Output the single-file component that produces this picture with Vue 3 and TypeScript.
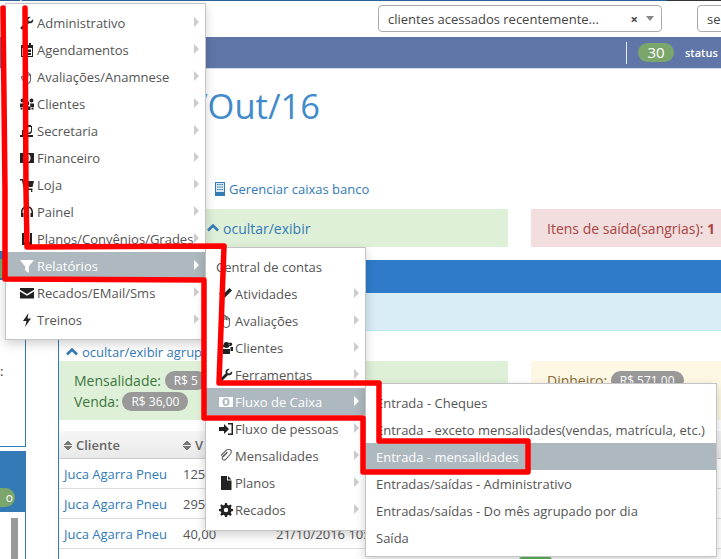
<script setup lang="ts">
type Item = { label: string; icon?: string; arrow?: boolean; active?: boolean }

const icons: Record<string, string> = {
  wrench: 'M13 3.200 10.600 5.600 8.600 5.200 8.200 3.200 10.600.9C8.800.3 6.700 1.600 6.500 3.600c0 .6.1 1.100.3 1.600L1 11c-.7.7-.6 1.500 0 2 .6.6 1.400.6 2 0l5.800-5.800c2.500.8 5.200-1.300 4.200-4Z',
  calendar: 'M3 0h2v2H3zM9 0h2v2H9zM1 2h12v12H1zM2 5v8h10V5zM3 6.500h3.500v2.500H3zM7.500 6.500H11v2.500H7.500zM3 10h3.500v2H3zM7.500 10H11v2H7.500z',
  hand: 'M4.500 7V1.800c0-1 1.500-1 1.500 0V6m0 0V3c0-1 1.500-1 1.500 0v3m0 0V3.500c0-1 1.500-1 1.500 0V6.500m0 0V5c0-1 1.500-1 1.500 0v4.500c0 2.500-1.500 4-3.500 4H7C5.500 13.500 4.500 12.500 3.500 11L1.500 8c-.5-1 .8-1.800 1.500-1L4.500 9',
  users: 'M2.500 1.500a2 2 0 1 1 0 4 2 2 0 0 1 0-4ZM11.500 1.500a2 2 0 1 1 0 4 2 2 0 0 1 0-4ZM7 4a2.300 2.300 0 1 1 0 4.600A2.300 2.300 0 0 1 7 4ZM0 6.500h4L3.500 10H0ZM10 6.500h4V10h-3.500ZM3.500 9.500h7V13h-7ZM.5 10.500h2v2h-2ZM11.500 10.500h2v2h-2Z',
  people: 'M7.500 1a3 3 0 1 1 0 6 3 3 0 0 1 0-6ZM3 3.500a1.800 1.800 0 1 1 0 3.600 1.800 1.800 0 0 1 0-3.600ZM11.500 1.500a1.800 1.800 0 1 1 0 3.600 1.800 1.800 0 0 1 0-3.600ZM4 8h7v5H4ZM0 8h3v4H0ZM11.500 6H14v4h-2.500Z',
  tie: 'M5 1h6v1h1v5c0 1.500-1 2.500-2 3h-4V8.500h3.500C10.500 8 11 7 11 6V3H5v3H3V2h2ZM2 6h6v5H2ZM0 11h13v2H0Z',
  money: 'M0 2h14v10H0ZM7 3a3.500 4 0 1 0 0 8 3.500 4 0 0 0 0-8ZM7 4.500a1.500 2.500 0 1 1 0 5 1.500 2.500 0 0 1 0-5Z',
  cart: 'M0 1h3l.5 2H14l-1.500 6H5l.3 1.500h7.200V12H4L2 2.500H0ZM5 12.200a1 1 0 1 1 0 1.800ZM11 12.200a1 1 0 1 1 0 1.800Z',
  headset: 'M7 1C3.500 1 1 3.500 1 7v5h2.500V8h-1V7c0-2.500 2-4.500 4.500-4.500S11.500 4.500 11.500 7v1h-1v4H13V7c0-3.500-2.500-6-6-6ZM5 8h1.500v5H5ZM7.500 8H9v5H7.500Z',
  book: 'M2 1h10v12H2ZM4 1v9h6V1Z',
  filter: 'M0 1h14L8.800 7.500V14L5.200 11.500v-4Z',
  envelope: 'M0 2h14v1.800L7 8 0 3.800ZM0 5.500 7 9.800l7-4.300V12.500H0Z',
  flash: 'M8.500 0 3 8h3.500L5 14l6-8.500H7.500Z',
  signin: 'M0 5h5V2l5 5-5 5V9H0ZM9 1h5v12H9v-1.500h3.500v-9H9Z',
  clip: 'M2 6.500 7.500 1c1.500-1 3-1 4 0s1 2.500 0 4l-5 5.500c-.8.8-2 .8-2.700 0-.7-.7-.7-1.700 0-2.500L8 4M3 8l5.500-5',
  file: 'M2 0h6v4.500h4.500V14H2ZM9 0l3.500 3.500H9Z',
  gear: 'M6 0h2l.4 2 1.300.5 1.700-1.100L12.800 2.800l-1.100 1.700.5 1.300 1.800.3v2l-1.800.4-.5 1.300 1.100 1.700-1.400 1.400-1.700-1.100-1.300.5L8 14H6l-.4-1.800-1.300-.5-1.700 1.100-1.400-1.400 1.100-1.700-.5-1.300L0 8V6l1.800-.3.5-1.300-1.100-1.700 1.400-1.400 1.700 1.100 1.300-.5ZM7 4.800a2.200 2.200 0 1 0 0 4.400 2.200 2.200 0 0 0 0-4.400Z',
  pencil: 'M10.500 1 13 3.500 5 11.500 1 13l1.500-4ZM0 6.500l3-2 1 1-3 2Z',
}
const stroked = ['clip', 'hand']

const menu1: Item[] = [
  { label: 'Administrativo', icon: 'wrench', arrow: true },
  { label: 'Agendamentos', icon: 'calendar', arrow: true },
  { label: 'Avaliações/Anamnese', icon: 'hand', arrow: true },
  { label: 'Clientes', icon: 'users', arrow: true },
  { label: 'Secretaria', icon: 'tie', arrow: true },
  { label: 'Financeiro', icon: 'money', arrow: true },
  { label: 'Loja', icon: 'cart', arrow: true },
  { label: 'Painel', icon: 'headset', arrow: true },
  { label: 'Planos/Convênios/Grades', icon: 'book', arrow: true },
  { label: 'Relatórios', icon: 'filter', arrow: true, active: true },
  { label: 'Recados/EMail/Sms', icon: 'envelope', arrow: true },
  { label: 'Treinos', icon: 'flash', arrow: true },
]
const menu2: Item[] = [
  { label: 'Central de contas' },
  { label: 'Atividades', icon: 'pencil', arrow: true },
  { label: 'Avaliações', icon: 'hand', arrow: true },
  { label: 'Clientes', icon: 'people', arrow: true },
  { label: 'Ferramentas', icon: 'wrench', arrow: true },
  { label: 'Fluxo de Caixa', icon: 'money', arrow: true, active: true },
  { label: 'Fluxo de pessoas', icon: 'signin', arrow: true },
  { label: 'Mensalidades', icon: 'clip', arrow: true },
  { label: 'Planos', icon: 'file', arrow: true },
  { label: 'Recados', icon: 'gear', arrow: true },
]
const menu3: Item[] = [
  { label: 'Entrada - Cheques' },
  { label: 'Entrada - exceto mensalidades(vendas, matrícula, etc.)' },
  { label: 'Entrada - mensalidades', active: true },
  { label: 'Entradas/saídas - Administrativo' },
  { label: 'Entradas/saídas - Do mês agrupado por dia' },
  { label: 'Saída' },
]
const menus = [
  { key: 'm1', items: menu1 },
  { key: 'm2', items: menu2 },
  { key: 'm3', items: menu3 },
]
const rows = [
  { name: 'Juca Agarra Pneu', value: '125', date: '' },
  { name: 'Juca Agarra Pneu', value: '295', date: '' },
  { name: 'Juca Agarra Pneu', value: '40,00', date: '21/10/2016 10:' },
]
</script>

<template>
  <div class="page">
    <div class="strip"></div>
    <header class="header">
      <div class="select first">
        <span class="sel-text">clientes acessados recentemente...</span>
        <span class="sel-x">×</span>
        <span class="sel-arrow"></span>
      </div>
      <div class="select second"><span class="sel-text">sel</span></div>
    </header>
    <div class="bar">
      <span class="bar-div"></span>
      <span class="bar-badge">30</span>
      <span class="bar-status">status d</span>
    </div>
    <div class="body">
      <aside class="side">
        <div class="side-a"><span class="side-badge">o</span></div>
        <div class="side-b"><span class="side-colon">:</span></div>
        <div class="side-c"><span class="side-badge big">o</span></div>
        <div class="side-d"><span class="side-gray"></span></div>
      </aside>
      <main class="main">
        <div class="title-row"><h1 class="title">21/Out/16</h1></div>
        <div class="link-row">
          <svg class="bank" width="10" height="14" viewBox="0 0 10 14"><path d="M0 0h10v14H0Z" fill="#337ab7"/><path d="M1 1h8v9H1Z" fill="#dbe7f2"/><path d="M2 2h1.500v1H2zM4.300 2h1.500v1H4.300zM6.500 2H8v1H6.500zM2 4.500h1.500v1H2zM4.300 4.500h1.500v1H4.300zM6.500 4.500H8v1H6.500zM2 7h1.500v1H2zM4.300 7h1.500v1H4.300zM6.500 7H8v1H6.500z" fill="#337ab7"/></svg>
          <a class="link">Gerenciar caixas banco</a>
        </div>
        <div class="alerts">
          <div class="alert green">
            <svg class="chev" width="12" height="8" viewBox="0 0 12 8"><path d="M1 6.500 6 1.500l5 5" fill="none" stroke="#337ab7" stroke-width="2.500"/></svg>
            <a class="link big">ocultar/exibir</a>
          </div>
          <div class="alert red">Itens de saída(sangrias): <b>1</b></div>
        </div>
        <section class="panel">
          <div class="panel-head"></div>
          <div class="panel-info"></div>
          <div class="toggle">
            <svg class="chev" width="12" height="8" viewBox="0 0 12 8"><path d="M1 6.500 6 1.500l5 5" fill="none" stroke="#337ab7" stroke-width="2.500"/></svg>
            <a class="link">ocultar/exibir agrup</a>
          </div>
          <div class="boxes">
            <div class="box box-green">
              <div class="box-line">Mensalidade: <span class="pill">R$ 5</span></div>
              <div class="box-line">Venda: <span class="pill">R$ 36,00</span></div>
            </div>
            <div class="box box-yellow">
              <div class="box-line">Dinheiro: <span class="pill">R$ 571,00</span></div>
            </div>
          </div>
          <div class="table">
            <div class="tr th">
              <span class="c1"><i class="sort"></i>Cliente</span>
              <span class="c2"><i class="sort"></i>V</span>
            </div>
            <div v-for="r in rows" :key="r.value" class="tr">
              <a class="c1 link">{{ r.name }}</a>
              <span class="c2">{{ r.value }}</span>
              <span class="c3">{{ r.date }}</span>
            </div>
          </div>
          <div class="foot-btn"></div>
        </section>
      </main>
    </div>

    <span class="caret"></span>
    <ul v-for="m in menus" :key="m.key" class="menu" :class="m.key">
      <li v-for="it in m.items" :key="it.label" class="item" :class="{ active: it.active }">
        <svg v-if="it.icon" class="ico" width="14" height="14" viewBox="0 0 14 14">
          <path v-if="stroked.includes(it.icon)" :d="icons[it.icon]" fill="none" stroke="currentColor" stroke-width="1.100" class="thin"/>
          <path v-else :d="icons[it.icon]" fill="currentColor" fill-rule="evenodd"/>
        </svg>
        <span class="label">{{ it.label }}</span>
        <span v-if="it.arrow" class="arrow"></span>
      </li>
    </ul>

    <svg class="ink" width="721" height="559" viewBox="0 0 721 559">
      <polyline points="3,8 5,190 5,279 204,280 204,418 363,418 363,472 528,472 528,441 379,441 379,383 219,383 224,246 27,247 26,190 25,8" fill="none" stroke="#f00" stroke-width="5.500" stroke-linejoin="round" stroke-linecap="round"/>
    </svg>
  </div>
</template>

<style scoped>
.page {
  position: relative;
  width: 721px;
  height: 559px;
  overflow: hidden;
  background: #fff;
  font-family: "Open Sans", sans-serif;
  font-size: 13px;
  color: #555;
}
.strip {
  height: 1px;
  background: linear-gradient(90deg, #2a6496 0, #2a6496 667px, #333 667px);
}
.header {
  height: 36px;
  box-sizing: border-box;
  padding: 4px 0 0 378px;
  display: flex;
  gap: 35px;
}
.select {
  flex: none;
  height: 27px;
  box-sizing: border-box;
  border: 1px solid #aaa;
  border-radius: 4px;
  display: flex;
  align-items: center;
  padding-left: 9px;
  color: #444;
  font-size: 13px;
}
.first { width: 284px; }
.second { width: 100px; }
.sel-text { flex: 1; white-space: nowrap; }
.sel-x { font-weight: 700; font-size: 13px; margin-right: 8px; color: #444; }
.sel-arrow {
  width: 0;
  height: 0;
  border-left: 4px solid transparent;
  border-right: 4px solid transparent;
  border-top: 5px solid #888;
  margin-right: 7px;
}
.bar {
  height: 32px;
  background: #6076a8;
  border-bottom: 1px solid #d5dbe8;
  box-sizing: border-box;
  display: flex;
  align-items: center;
  padding-left: 626px;
  color: #fff;
  white-space: nowrap;
}
.bar-div { flex: none; width: 1px; height: 22px; background: #e6e9f1; }
.bar-badge {
  flex: none;
  margin-left: 11px;
  width: 36px;
  height: 19px;
  border-radius: 10px;
  background: #7ba66b;
  text-align: center;
  font-size: 15px;
  line-height: 19px;
}
.bar-status { flex: none; margin-left: 11px; font-size: 11px; font-weight: 600; }
.body { display: flex; height: 490px; }
.side { width: 26px; margin-right: 32px; flex: none; padding-top: 182px; }
.side-a { height: 29px; background: #337ab7; overflow: hidden; padding-top: 8px; box-sizing: border-box; }
.side-b {
  height: 167px;
  box-sizing: border-box;
  border-right: 1px solid #337ab7;
  border-bottom: 1px solid #337ab7;
  position: relative;
  padding-top: 82px;
}
.side-colon { color: #333; font-size: 13px; line-height: 18px; display: block; }
.side-c {
  margin-top: 4px;
  height: 61px;
  background: #337ab7;
  box-sizing: border-box;
  padding-top: 37px;
}
.side-badge {
  display: block;
  width: 15px;
  height: 19px;
  background: #7ba66b;
  border-radius: 0 10px 10px 0;
  color: #fff;
  text-align: right;
  line-height: 19px;
  font-size: 12px;
  padding-right: 2px;
  box-sizing: border-box;
}
.side-d { height: 60px; border-right: 1px solid #337ab7; box-sizing: border-box; padding: 6px 0 0 11px; }
.side-gray { display: block; width: 7px; height: 50px; background: #999; }
.main { flex: 1; min-width: 0; }
.title-row { width: 262px; display: flex; justify-content: flex-end; padding-top: 17px; }
.title {
  margin: 0;
  font-size: 34.500px;
  line-height: 40px;
  font-weight: 400;
  color: #428bca;
  white-space: nowrap;
}
.link { color: #337ab7; white-space: nowrap; }
.link.big { font-size: 14px; }
.link-row {
  margin-top: 54px;
  height: 18px;
  padding-left: 157px;
  display: flex;
  align-items: center;
  gap: 4px;
}
.alerts { margin-top: 11px; display: flex; gap: 23px; }
.alert {
  height: 38px;
  box-sizing: border-box;
  display: flex;
  align-items: center;
  flex: none;
  white-space: pre;
  font-size: 14px;
}
.alert.green {
  width: 450px;
  background: #dff0d8;
  padding-left: 149px;
  gap: 4px;
}
.alert.red {
  width: 190px;
  background: #f2dede;
  color: #a94442;
  padding-left: 16px;
}
.panel {
  margin-top: 13px;
  border-left: 1px solid #337ab7;
  height: 300px;
  position: relative;
}
.panel-head { height: 33px; background: #2f7bc9; }
.panel-info { height: 38px; background: #d9edf7; border-bottom: 1px solid #bce8f1; box-sizing: border-box; }
.toggle {
  height: 30px;
  box-sizing: border-box;
  padding: 12px 0 0 7px;
  display: flex;
  align-items: center;
  gap: 4px;
}
.boxes { display: flex; gap: 23px; }
.box { height: 59px; flex: none; box-sizing: border-box; font-size: 14px; }
.box-green { width: 449px; background: #dff0d8; color: #3c763d; padding: 9px 0 0 15px; }
.box-yellow { width: 190px; background: #fcf8e3; color: #8a6d3b; padding: 9px 0 0 16px; }
.box-line { height: 21px; line-height: 21px; white-space: nowrap; }
.pill {
  display: inline-block;
  background: #999;
  color: #fff;
  border-radius: 10px;
  font-size: 12px;
  line-height: 19px;
  height: 19px;
  padding: 0 9px;
  vertical-align: 1px;
}
.table { margin-top: 11px; }
.tr {
  display: grid;
  grid-template-columns: 119px 93px 300px;
  height: 30px;
  align-items: center;
  border-bottom: 1px solid #ddd;
  box-sizing: border-box;
  padding-left: 5px;
  white-space: nowrap;
  color: #555;
}
.th {
  height: 28px;
  padding-top: 1px;
  font-size: 13px;
  font-weight: 600;
  color: #666;
  background: linear-gradient(#f6f6f6, #e9e9e9);
  border-bottom: 1px solid #ccc;
}
.c2, .c1 { display: flex; align-items: center; }
.sort {
  width: 8px;
  height: 11px;
  margin-right: 4px;
  flex: none;
  background:
    linear-gradient(135deg, transparent 50%, #777 50%) 0 0 / 4px 5px no-repeat,
    linear-gradient(225deg, transparent 50%, #777 50%) 4px 0 / 4px 5px no-repeat,
    linear-gradient(45deg, transparent 50%, #777 50%) 0 6px / 4px 5px no-repeat,
    linear-gradient(315deg, transparent 50%, #777 50%) 4px 6px / 4px 5px no-repeat;
}
.foot-btn {
  position: absolute;
  left: 460px;
  bottom: 0;
  width: 33px;
  height: 3px;
  background: #5cb85c;
  border-radius: 4px 4px 0 0;
}
.caret {
  position: absolute;
  left: 15px;
  top: 0;
  width: 0;
  height: 0;
  border-left: 6px solid transparent;
  border-right: 6px solid transparent;
  border-bottom: 4px solid #fff;
}
.menu {
  position: absolute;
  margin: 0;
  padding: 5px 0;
  list-style: none;
  background: #fff;
  border: 1px solid #c4c4c4;
  box-sizing: border-box;
  box-shadow: 0 4px 10px rgba(0, 0, 0, .18);
}
.m1 { left: 5px; top: 3px; width: 201px; height: 337px; }
.m2 { left: 205px; top: 247px; width: 161px; height: 284px; }
.m3 { left: 365px; top: 383px; width: 352px; height: 174px; }
.item {
  position: relative;
  height: 27px;
  display: flex;
  align-items: center;
  white-space: nowrap;
  color: #555;
}
.m1 .item { padding-left: 14px; }
.m2 .item { padding-left: 10px; }
.m3 .item { padding-left: 10px; }
.ico { flex: none; margin-right: 3px; color: #222; }
.ico .thin { color: #666; }
.m2 .ico { margin-left: 3px; margin-right: 2px; }
.item.active { background: #adb8bf; color: #fff; }
.item.active .ico { color: #fff; }
.arrow {
  position: absolute;
  right: 6px;
  top: 8px;
  width: 0;
  height: 0;
  border-top: 5px solid transparent;
  border-bottom: 5px solid transparent;
  border-left: 5px solid #ccc;
}
.active .arrow { border-left-color: #fff; }
.ink { position: absolute; left: 0; top: 0; pointer-events: none; }
</style>
